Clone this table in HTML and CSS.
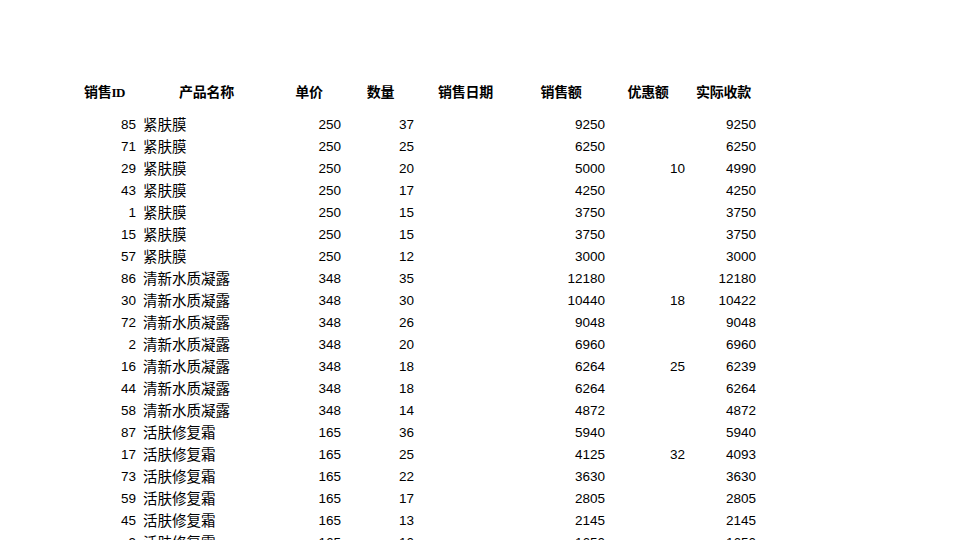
FILE: index.html
```html
<!DOCTYPE html>
<html lang="zh">
<head>
<meta charset="utf-8">
<title>销售数据</title>
<link rel="stylesheet" href="styles.css">
</head>
<body>
<div class="sheet">
<table class="grid">
<colgroup>
<col class="c-id"><col class="c-name"><col class="c-price"><col class="c-qty"><col class="c-date"><col class="c-amt"><col class="c-disc"><col class="c-net">
</colgroup>
<thead>
<tr class="head">
<th>销售<span class="latin">ID</span></th><th>产品名称</th><th>单价</th><th>数量</th><th>销售日期</th><th>销售额</th><th>优惠额</th><th>实际收款</th>
</tr>
</thead>
<tbody>
<tr class="gap"><td colspan="8"></td></tr>
<tr><td class="n">85</td><td class="t">紧肤膜</td><td class="n">250</td><td class="n">37</td><td></td><td class="n">9250</td><td class="n"></td><td class="n">9250</td></tr>
<tr><td class="n">71</td><td class="t">紧肤膜</td><td class="n">250</td><td class="n">25</td><td></td><td class="n">6250</td><td class="n"></td><td class="n">6250</td></tr>
<tr><td class="n">29</td><td class="t">紧肤膜</td><td class="n">250</td><td class="n">20</td><td></td><td class="n">5000</td><td class="n">10</td><td class="n">4990</td></tr>
<tr><td class="n">43</td><td class="t">紧肤膜</td><td class="n">250</td><td class="n">17</td><td></td><td class="n">4250</td><td class="n"></td><td class="n">4250</td></tr>
<tr><td class="n">1</td><td class="t">紧肤膜</td><td class="n">250</td><td class="n">15</td><td></td><td class="n">3750</td><td class="n"></td><td class="n">3750</td></tr>
<tr><td class="n">15</td><td class="t">紧肤膜</td><td class="n">250</td><td class="n">15</td><td></td><td class="n">3750</td><td class="n"></td><td class="n">3750</td></tr>
<tr><td class="n">57</td><td class="t">紧肤膜</td><td class="n">250</td><td class="n">12</td><td></td><td class="n">3000</td><td class="n"></td><td class="n">3000</td></tr>
<tr><td class="n">86</td><td class="t">清新水质凝露</td><td class="n">348</td><td class="n">35</td><td></td><td class="n">12180</td><td class="n"></td><td class="n">12180</td></tr>
<tr><td class="n">30</td><td class="t">清新水质凝露</td><td class="n">348</td><td class="n">30</td><td></td><td class="n">10440</td><td class="n">18</td><td class="n">10422</td></tr>
<tr><td class="n">72</td><td class="t">清新水质凝露</td><td class="n">348</td><td class="n">26</td><td></td><td class="n">9048</td><td class="n"></td><td class="n">9048</td></tr>
<tr><td class="n">2</td><td class="t">清新水质凝露</td><td class="n">348</td><td class="n">20</td><td></td><td class="n">6960</td><td class="n"></td><td class="n">6960</td></tr>
<tr><td class="n">16</td><td class="t">清新水质凝露</td><td class="n">348</td><td class="n">18</td><td></td><td class="n">6264</td><td class="n">25</td><td class="n">6239</td></tr>
<tr><td class="n">44</td><td class="t">清新水质凝露</td><td class="n">348</td><td class="n">18</td><td></td><td class="n">6264</td><td class="n"></td><td class="n">6264</td></tr>
<tr><td class="n">58</td><td class="t">清新水质凝露</td><td class="n">348</td><td class="n">14</td><td></td><td class="n">4872</td><td class="n"></td><td class="n">4872</td></tr>
<tr><td class="n">87</td><td class="t">活肤修复霜</td><td class="n">165</td><td class="n">36</td><td></td><td class="n">5940</td><td class="n"></td><td class="n">5940</td></tr>
<tr><td class="n">17</td><td class="t">活肤修复霜</td><td class="n">165</td><td class="n">25</td><td></td><td class="n">4125</td><td class="n">32</td><td class="n">4093</td></tr>
<tr><td class="n">73</td><td class="t">活肤修复霜</td><td class="n">165</td><td class="n">22</td><td></td><td class="n">3630</td><td class="n"></td><td class="n">3630</td></tr>
<tr><td class="n">59</td><td class="t">活肤修复霜</td><td class="n">165</td><td class="n">17</td><td></td><td class="n">2805</td><td class="n"></td><td class="n">2805</td></tr>
<tr><td class="n">45</td><td class="t">活肤修复霜</td><td class="n">165</td><td class="n">13</td><td></td><td class="n">2145</td><td class="n"></td><td class="n">2145</td></tr>
<tr><td class="n">9</td><td class="t">活肤修复霜</td><td class="n">165</td><td class="n">10</td><td></td><td class="n">1650</td><td class="n"></td><td class="n">1650</td></tr>
</tbody>
</table>
</div>
</body>
</html>
```
FILE: styles.css
```css
html, body {
  margin: 0;
  padding: 0;
  background: #ffffff;
  overflow: hidden;
}
.sheet {
  width: 960px;
  height: 540px;
  overflow: hidden;
  padding: 80px 0 0 70px;
  box-sizing: border-box;
  color: #000;
  font-family: "Liberation Sans", "Noto Sans CJK SC", sans-serif;
}
.grid {
  border-collapse: collapse;
  table-layout: fixed;
  width: 689px;
}
.c-id { width: 69px; }
.c-name { width: 135px; }
.c-price { width: 70px; }
.c-qty { width: 73px; }
.c-date { width: 97px; }
.c-amt { width: 94px; }
.c-disc { width: 80px; }
.c-net { width: 71px; }
.grid th, .grid td {
  padding: 0;
  height: 22px;
  line-height: 22px;
  white-space: nowrap;
  overflow: visible;
}
.head th {
  font-family: "Noto Sans CJK SC", sans-serif;
  font-weight: 700;
  font-size: 14px;
  text-align: center;
  letter-spacing: -0.3px;
}
.head .latin {
  font-family: "Liberation Serif", serif;
  font-size: 13px;
  line-height: 1;
  letter-spacing: -0.5px;
}
.gap td {
  height: 11px;
  line-height: 11px;
}
.grid td.n {
  text-align: right;
  padding: 1px 3px 0 0;
  height: 21px;
  line-height: 21px;
  font-size: 13.5px;
  font-family: "Liberation Sans", sans-serif;
}
.grid td.t {
  text-align: left;
  padding: 0 0 0 4px;
  font-family: "Noto Sans CJK SC", sans-serif;
  font-size: 14.5px;
  font-weight: 400;
}
```
